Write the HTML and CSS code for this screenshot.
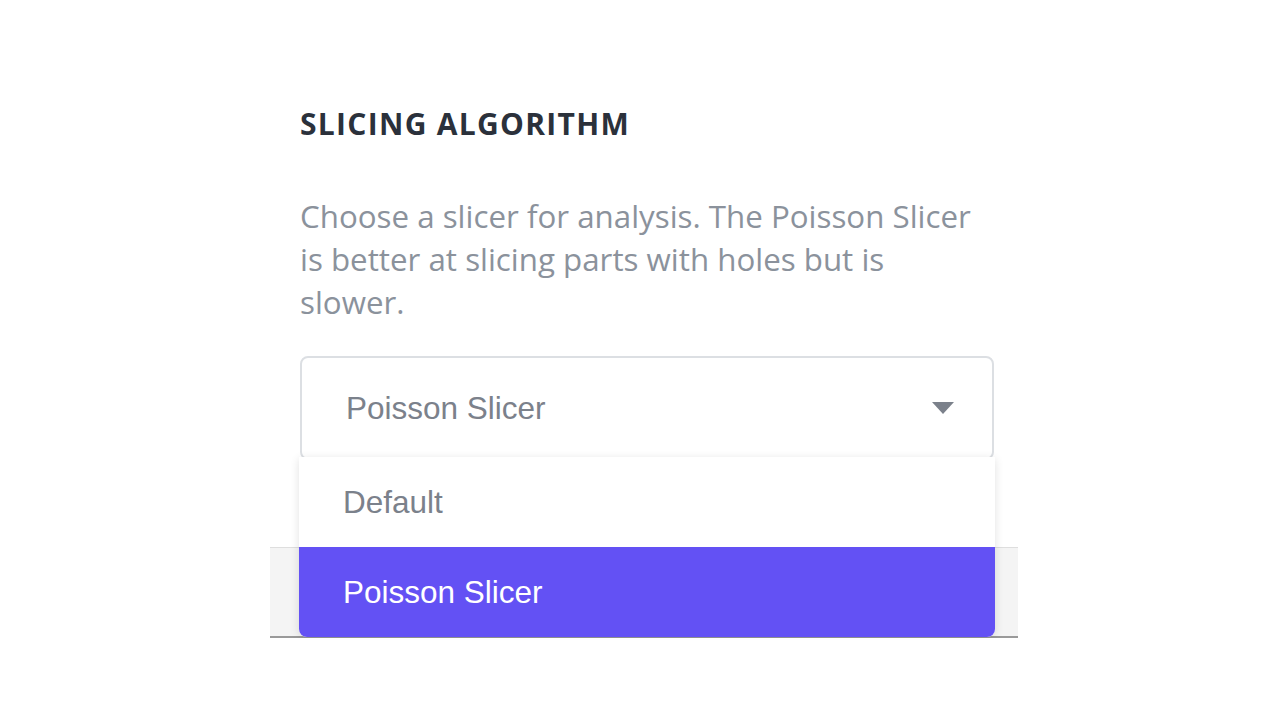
FILE: index.html
```html
<!DOCTYPE html>
<html>
<head>
  <link rel="stylesheet" href="styles.css">
</head>
<body>

<!-- Настройка алгоритма -->
<div class="panel">
  <div class="field">
    <h3 class="field-title">SLICING ALGORITHM</h3>
    <p class="field-help">Choose a slicer for analysis. The Poisson Slicer is better at slicing parts with holes but is slower.</p>

    <div class="dropdown">
      <div class="select">
        <span class="select-value">Poisson Slicer</span>
        <span class="caret"></span>
      </div>
      <ul class="menu">
        <li class="menu-item">Default</li>
        <li class="menu-item active">Poisson Slicer</li>
      </ul>
    </div>
  </div>

  <div class="panel-footer"></div>
</div>

</body>
</html>
```

FILE: styles.css
```css
body {
  margin: 0;
  background: #fff;
  font-family: "Open Sans", "Liberation Sans", sans-serif;
}

/* Панель */
.panel {
  width: 748px;
  margin-left: 270px;
  padding-top: 107px;
}
.field {
  padding: 0 24px 87px 30px;
}
.field-title {
  margin: 0;
  font-size: 30px;
  line-height: 34px;
  font-weight: bold;
  letter-spacing: 1.3px;
  color: #2b313b;
}
.field-help {
  max-width: 685px;
  margin: 54px 0 0;
  font-size: 31.3px;
  line-height: 43px;
  color: #8b929c;
}

/* Выпадающий список */
.dropdown {
  position: relative;
  margin-top: 32px;
}
.select {
  display: flex;
  align-items: center;
  justify-content: space-between;
  height: 100px;
  padding: 0 38px 0 44px;
  border: 2px solid #dcdfe3;
  border-radius: 8px;
  font-family: "Liberation Sans", sans-serif;
  font-size: 31.5px;
  color: #7b818b;
}
.caret {
  width: 0;
  height: 0;
  border-left: 11px solid transparent;
  border-right: 11px solid transparent;
  border-top: 12px solid #7b818b;
}
.menu {
  position: absolute;
  top: 101px;
  left: -1px;
  right: -1px;
  margin: 0;
  padding: 0;
  list-style: none;
  background: #fff;
  border-radius: 0 0 8px 8px;
  box-shadow: 0 2px 10px rgba(0, 0, 0, 0.12);
  overflow: hidden;
  font-family: "Liberation Sans", sans-serif;
  font-size: 31.5px;
}
.menu-item {
  height: 90px;
  line-height: 90px;
  padding-left: 44px;
  color: #7b818b;
}
.menu-item.active {
  background: #6351f4;
  color: #fff;
}

.panel-footer {
  height: 88px;
  background: #f4f4f4;
  border-top: 1px solid #dedede;
  border-bottom: 2px solid #9a9a9a;
}
```
